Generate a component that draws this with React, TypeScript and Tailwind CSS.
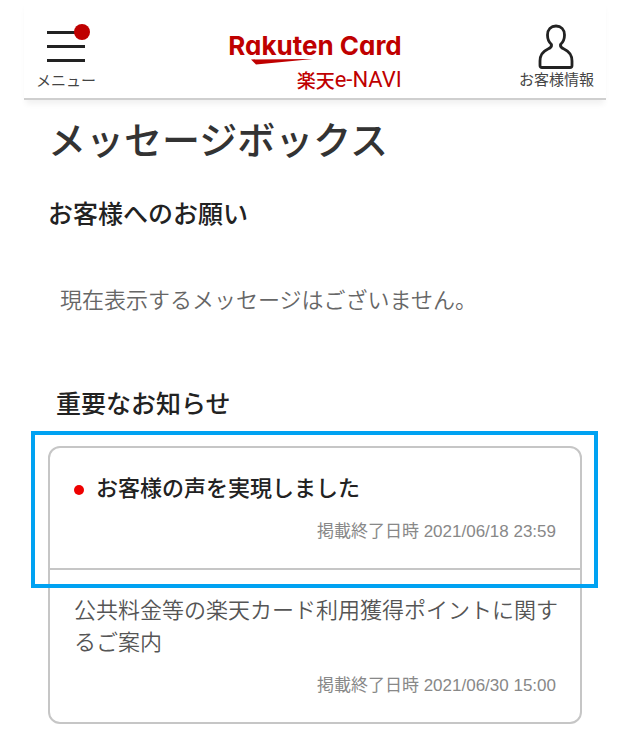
interface Notice {
  title: string;
  expires: string;
  unread: boolean;
}

const notices: Notice[] = [
  { title: 'お客様の声を実現しました', expires: '2021/06/18 23:59', unread: true },
  {
    title: '公共料金等の楽天カード利用獲得ポイントに関するご案内',
    expires: '2021/06/30 15:00',
    unread: false,
  },
];

function Logo() {
  return (
    <a href="#" className="flex flex-col items-end pt-1 text-[#bf0000]">
      <span className="relative font-['Inter',sans-serif] text-[26px] leading-9 font-bold whitespace-nowrap [font-feature-settings:'cv11']">
        Rakuten Card
        <svg
          className="absolute top-[31px] left-[22px] h-[6px] w-[64px]"
          viewBox="0 0 64 6"
          fill="currentColor"
          aria-hidden="true"
        >
          <path d="M1 0.4L63 0L6 5.6Z" />
        </svg>
      </span>
      <span className="flex items-center leading-8 whitespace-nowrap">
        <span className="text-[19px] font-medium">楽天</span>
        <span className="font-['Roboto',sans-serif] text-[22px] leading-8">e-NAVI</span>
      </span>
    </a>
  );
}

function Header() {
  return (
    <header className="mx-6 grid grid-cols-[1fr_auto_1fr] items-start border-b-2 border-[#cfcfcf] px-3 pt-6 shadow-[0_6px_6px_-2px_rgba(0,0,0,0.06)]">
      <button type="button" className="flex h-[74px] w-[60px] flex-col items-center">
        <span className="relative mt-[7px] flex w-[38px] flex-col gap-[11px]">
          <span className="h-[3px] bg-[#222]" />
          <span className="h-[3px] bg-[#222]" />
          <span className="h-[3px] bg-[#222]" />
          {/* 未読バッジ */}
          <span className="absolute -top-[7px] -right-[5px] size-4 rounded-full bg-[#bf0000]" />
        </span>
        <span className="mt-2 text-[15px] leading-5 text-[#444]">メニュー</span>
      </button>

      <Logo />

      <button type="button" className="flex h-[74px] flex-col items-center justify-self-end">
        <svg
          className="h-[45px] w-[36px]"
          viewBox="0 0 36 45"
          fill="none"
          stroke="#222"
          strokeWidth="2.8"
          strokeLinejoin="round"
          aria-hidden="true"
        >
          <path d="M13.5 20.5Q9.500 17 9.500 11C9.500 5.500 13 2 18 2C23 2 26.500 5.500 26.500 11Q26.500 17 22.500 20.500C22 23 23.500 24 26 25C31.500 27.500 34 31 34 37V41.500Q34 43.500 32 43.500H4Q2 43.500 2 41.500V37C2 31 4.500 27.500 10 25C12.500 24 14 23 13.500 20.500Z" />
        </svg>
        <span className="text-[15px] leading-5 text-[#444]">お客様情報</span>
      </button>
    </header>
  );
}

function NoticeItem({ notice }: { notice: Notice }) {
  return (
    <li className="relative border-b-2 border-[#c6c6c6] px-6 pt-5.5 pb-6 last:border-b-0">
      <a href="#" className="block">
        {notice.unread ? (
          <p className="flex items-center text-[22px] leading-8 font-medium text-[#222]">
            <span className="mt-2 mr-3 size-[10px] rounded-full bg-[#ee0000]" />
            {notice.title}
          </p>
        ) : (
          <p className="-mr-2 text-[22px] leading-8 font-[350] text-[#555]">{notice.title}</p>
        )}
        <p className="mt-4.5 text-right font-['Liberation_Sans','Noto_Sans_CJK_JP',sans-serif] text-[17px] leading-6 text-[#888]">
          掲載終了日時 {notice.expires}
        </p>
      </a>
      {/* 未読のお知らせを囲む強調枠 */}
      {notice.unread && (
        <span className="pointer-events-none absolute -top-[17px] -right-[18px] -bottom-[20px] -left-[19px] border-4 border-[#00a2f2]" />
      )}
    </li>
  );
}

export default function App() {
  return (
    <div className="bg-white pb-7 font-['Noto_Sans_CJK_JP',sans-serif]">
      <Header />
      <main className="px-12">
        <h1 className="pt-3.5 text-[38px] leading-12 font-medium text-[#333]">
          メッセージボックス
        </h1>

        <section>
          <h2 className="mt-8 text-[25px] leading-9 font-medium text-[#222]">お客様へのお願い</h2>
          <p className="mt-13 px-3 text-[22px] leading-8 font-[350] text-[#666]">
            現在表示するメッセージはございません。
          </p>
        </section>

        <section>
          <h2 className="mt-17.5 px-2 text-[25px] leading-9 font-medium text-[#222]">
            重要なお知らせ
          </h2>
          <ul className="mt-6.5 rounded-xl border-2 border-[#c6c6c6]">
            {notices.map((notice) => (
              <NoticeItem key={notice.title} notice={notice} />
            ))}
          </ul>
        </section>
      </main>
    </div>
  );
}
